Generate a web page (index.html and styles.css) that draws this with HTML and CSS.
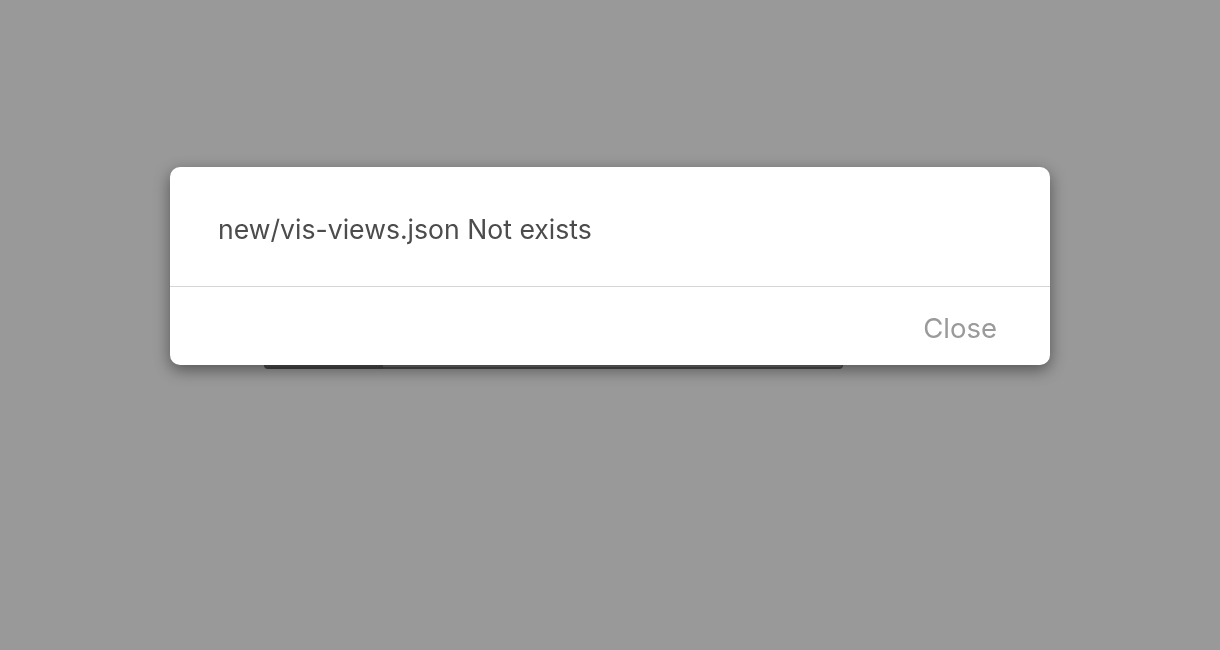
FILE: index.html
```html
<!DOCTYPE html>
<html lang="en">
<head>
<meta charset="utf-8">
<title>Alert</title>
<link rel="stylesheet" href="styles.css">
</head>
<body>
<main class="page">
  <div class="input-group">
    <span class="addon"></span>
    <span class="field"></span>
  </div>
</main>
<div class="overlay">
  <div class="dialog" role="dialog">
    <div class="dialog-body">new/vis-views.json Not exists</div>
    <div class="dialog-footer">
      <button class="btn-close" type="button">Close</button>
    </div>
  </div>
</div>
</body>
</html>
```

FILE: styles.css
```css
html, body {
  margin: 0;
  padding: 0;
  height: 100%;
}
body {
  background: #999999;
  font-family: "Inter", "Noto Sans", "Liberation Sans", sans-serif;
  overflow: hidden;
}
.page {
  padding: 320px 0 0 264px;
}
.input-group {
  display: flex;
  width: 579px;
  height: 49px;
}
.addon {
  width: 119px;
  background: #505050;
  border-radius: 4px 0 0 4px;
  border-bottom: 2px solid #454545;
}
.field {
  flex: 1;
  background: #6c6c6c;
  border: 1px solid #555;
  border-bottom: 2px solid #4c4c4c;
  border-left: none;
  border-radius: 0 4px 4px 0;
}
.overlay {
  position: fixed;
  inset: 0;
  display: flex;
  justify-content: center;
  align-items: flex-start;
}
.dialog {
  margin-top: 167px;
  width: 880px;
  background: #fff;
  border-radius: 10px;
  box-shadow: 0 5px 16px rgba(0, 0, 0, 0.45);
  overflow: hidden;
}
.dialog-body {
  padding: 46px 48px 41px;
  font-size: 26.6px;
  line-height: 32px;
  color: #4c4c4c;
  border-bottom: 1px solid #d6d6d6;
}
.dialog-footer {
  display: flex;
  justify-content: flex-end;
  align-items: center;
  height: 78px;
  padding-right: 53px;
}
.btn-close {
  background: none;
  border: none;
  padding: 3px 0 0;
  font-family: inherit;
  font-size: 27.5px;
  line-height: 32px;
  color: #9a9a9a;
  cursor: pointer;
}
```
